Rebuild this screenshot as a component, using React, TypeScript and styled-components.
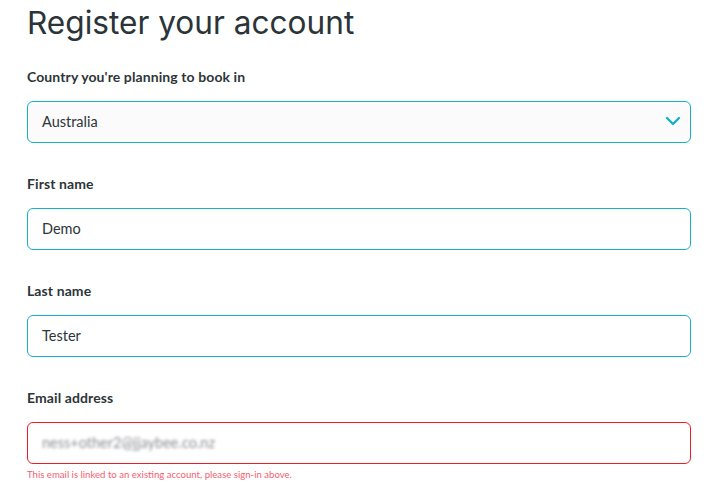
import { createGlobalStyle } from "styled-components";
import styled from "styled-components";

const GlobalStyle = createGlobalStyle`
  body {
    margin: 0;
    background: #ffffff;
    font-family: "Lato", "Noto Sans", sans-serif;
    color: #2b3236;
  }
`;

const Page = styled.div`
  padding: 3px 29px 0 27px;
`;

const Title = styled.h1`
  margin: 0 0 26px;
  font-family: "Inter", "Lato", sans-serif;
  font-size: 31.6px;
  font-weight: 400;
  line-height: 40px;
  color: #2b3438;
`;

const Field = styled.div`
  display: flex;
  flex-direction: column;
  margin-bottom: 33px;
`;

const Label = styled.label`
  font-size: 14px;
  font-weight: 700;
  letter-spacing: 0.1px;
  line-height: 16px;
  color: #2e3539;
  margin-bottom: 16px;
`;

const Box = styled.div<{ $error?: boolean; $select?: boolean }>`
  display: flex;
  align-items: center;
  justify-content: space-between;
  height: 42px;
  box-sizing: border-box;
  padding: 0 9px 2px 14px;
  border: 1px solid ${(p) => (p.$error ? "#ee1c25" : "#16b1c9")};
  border-radius: 6px;
  background: ${(p) => (p.$select ? "#fbfbfb" : "#ffffff")};
  font-size: 14.5px;
  color: #2e3539;
`;

const Blurred = styled.span`
  color: #8a8f93;
  filter: blur(1.4px);
`;

const ErrorText = styled.div`
  margin-top: 5px;
  font-size: 9.6px;
  color: #f35e73;
`;

const Chevron = () => (
  <svg width="16" height="10" viewBox="0 0 16 10" fill="none">
    <path
      d="M2 2l6 6 6-6"
      stroke="#16b1c9"
      strokeWidth="2.4"
      strokeLinecap="round"
      strokeLinejoin="round"
    />
  </svg>
);

export default function App() {
  return (
    <Page>
      <GlobalStyle />
      <Title>Register your account</Title>
      <Field>
        <Label>Country you're planning to book in</Label>
        <Box $select>
          Australia
          <Chevron />
        </Box>
      </Field>
      <Field>
        <Label>First name</Label>
        <Box>Demo</Box>
      </Field>
      <Field>
        <Label>Last name</Label>
        <Box>Tester</Box>
      </Field>
      <Field>
        <Label>Email address</Label>
        <Box $error>
          <Blurred>ness+other2@jjaybee.co.nz</Blurred>
        </Box>
        <ErrorText>
          This email is linked to an existing account, please sign-in above.
        </ErrorText>
      </Field>
    </Page>
  );
}
